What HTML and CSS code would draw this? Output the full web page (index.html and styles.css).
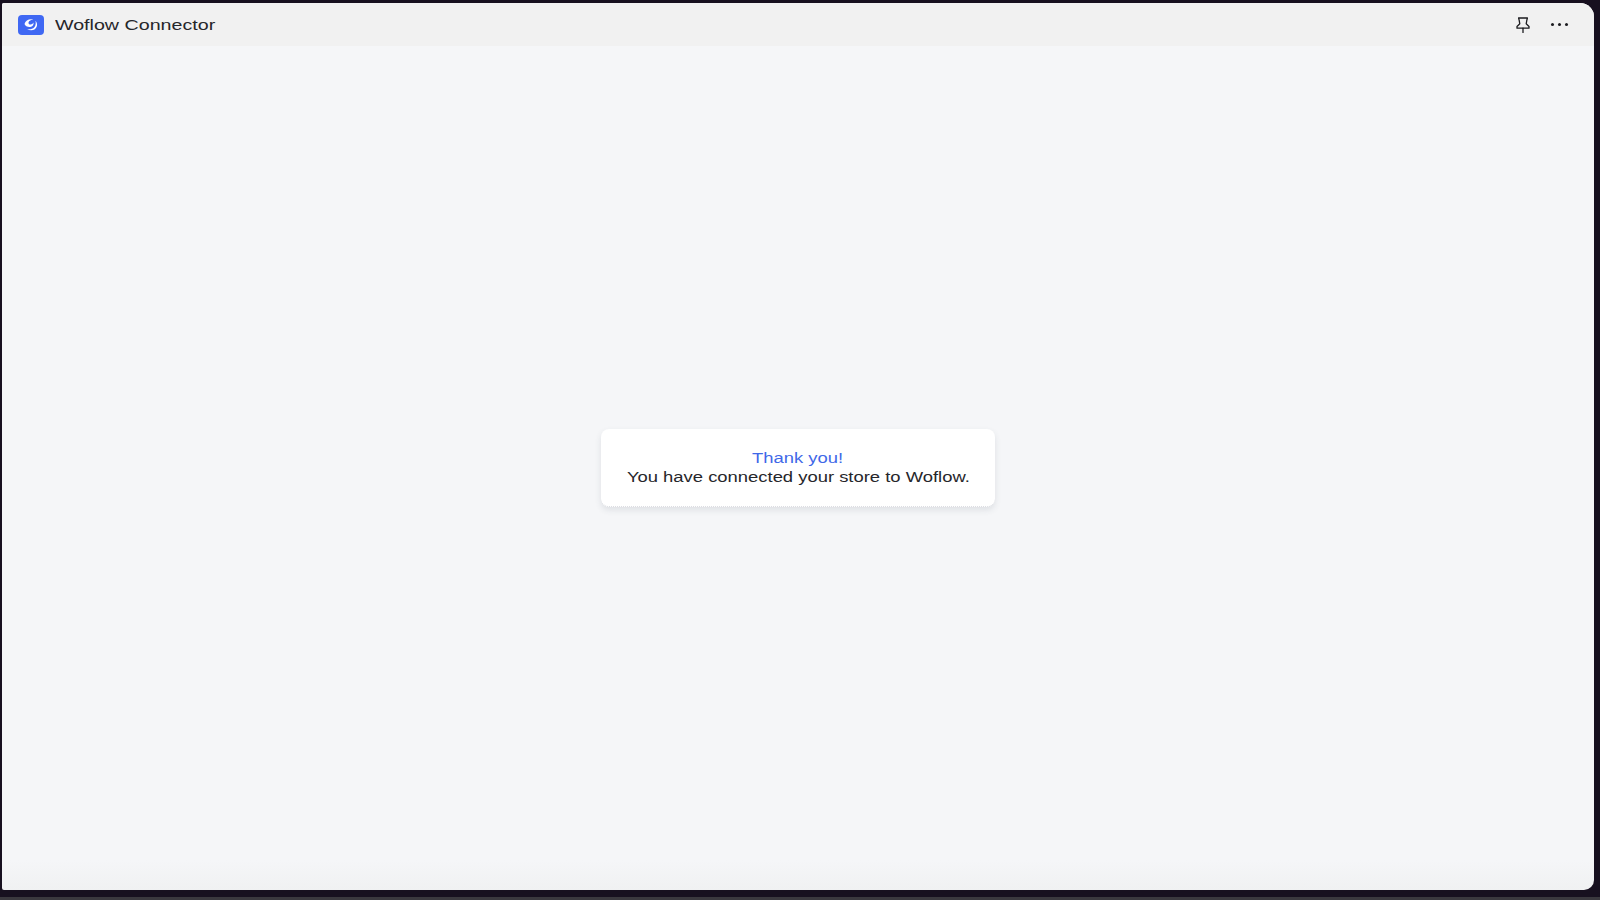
FILE: index.html
```html
<!DOCTYPE html>
<html lang="en">
<head>
<meta charset="utf-8">
<title>Woflow Connector</title>
<link rel="stylesheet" href="styles.css">
</head>
<body>
<div class="window">
  <header class="topbar">
    <div class="brand">
      <svg class="logo" width="26" height="20" viewBox="0 0 26 20">
        <rect width="26" height="20" rx="4" fill="#3f68f3"/>
        <path d="M6.5 9C7.4 5.6 11.2 3.6 15.4 4.6C13.2 4.9 10.9 5.9 10.5 7.4C10.2 8.8 11.6 9.7 13.1 9.4C14.2 9.2 15 8.5 15.4 7.6C16 9.7 14.5 11.8 12.2 12C9.5 12.2 7.2 11 6.5 9Z" fill="#fff"/>
        <path d="M17.4 5.8C19.8 8.2 19.6 12.2 16.8 14.2C14.6 15.8 11.4 15.7 9 14.1C11.6 14.7 14.6 14.2 16.3 12.3C17.7 10.7 18.1 8.2 17.4 5.8Z" fill="#fff"/>
      </svg>
      <span class="title">Woflow Connector</span>
    </div>
    <div class="actions">
      <svg class="pin" width="14" height="16" viewBox="0 0 14 16" fill="none" stroke="#1b1b1f" stroke-width="1.3" stroke-linejoin="round" stroke-linecap="round">
        <path d="M2.6 1H11.4L10.8 3.4L10.2 6.8L13 9.4V11.2H1V9.4L3.8 6.8L3.2 3.4Z"/>
        <path d="M7 11.2V15.4"/>
      </svg>
      <div class="more"><i></i><i></i><i></i></div>
    </div>
  </header>
  <main class="content">
    <section class="card">
      <p class="thanks"><span class="stretched">Thank you!</span></p>
      <p class="message"><span class="stretched">You have connected your store to Woflow.</span></p>
    </section>
  </main>
</div>
</body>
</html>
```
FILE: styles.css
```css
* { box-sizing: border-box; }
html, body { height: 100%; }
body {
  margin: 0;
  height: 900px;
  overflow: hidden;
  padding: 3px 6px 10px 2px;
  background: linear-gradient(to bottom, #17101f 897px, #3a383e 897px);
  font-family: "Liberation Sans", Arial, sans-serif;
  color: #1b1b1f;
}
.window {
  height: 100%;
  display: flex;
  flex-direction: column;
  background: linear-gradient(to bottom, #f5f6f8 calc(100% - 30px), #f0f1f2 100%);
  border-radius: 2px 14px 10px 2px;
  overflow: hidden;
}
.topbar {
  flex: none;
  height: 43px;
  display: flex;
  align-items: center;
  justify-content: space-between;
  padding: 0 26px 0 16px;
  background: #f1f1f1;
}
.brand { display: flex; align-items: center; gap: 11px; }
.logo { display: block; }
.title {
  display: inline-block;
  font-size: 15px;
  line-height: 20px;
  color: #26262a;
  transform: scaleX(1.31);
  transform-origin: left center;
}
.actions { display: flex; align-items: center; gap: 21px; }
.pin { display: block; }
.more { display: flex; gap: 3.5px; }
.more i { width: 3.5px; height: 3.5px; border-radius: 50%; background: #1b1b1f; display: block; }
.content {
  flex: 1;
  display: flex;
  align-items: center;
  justify-content: center;
}
.card {
  width: 394px;
  height: 78px;
  padding: 20px 0 0;
  background: #fff;
  border-radius: 8px;
  border-bottom: 1px dotted #dcdee3;
  box-shadow: 0 3px 6px rgba(60, 70, 90, 0.12);
  text-align: center;
  font-size: 14px;
  line-height: 19px;
}
.card p { margin: 0; }
.stretched { display: inline-block; transform: scaleX(1.315); }
.thanks { color: #3f68e8; }
.message { color: #26262a; }
```
